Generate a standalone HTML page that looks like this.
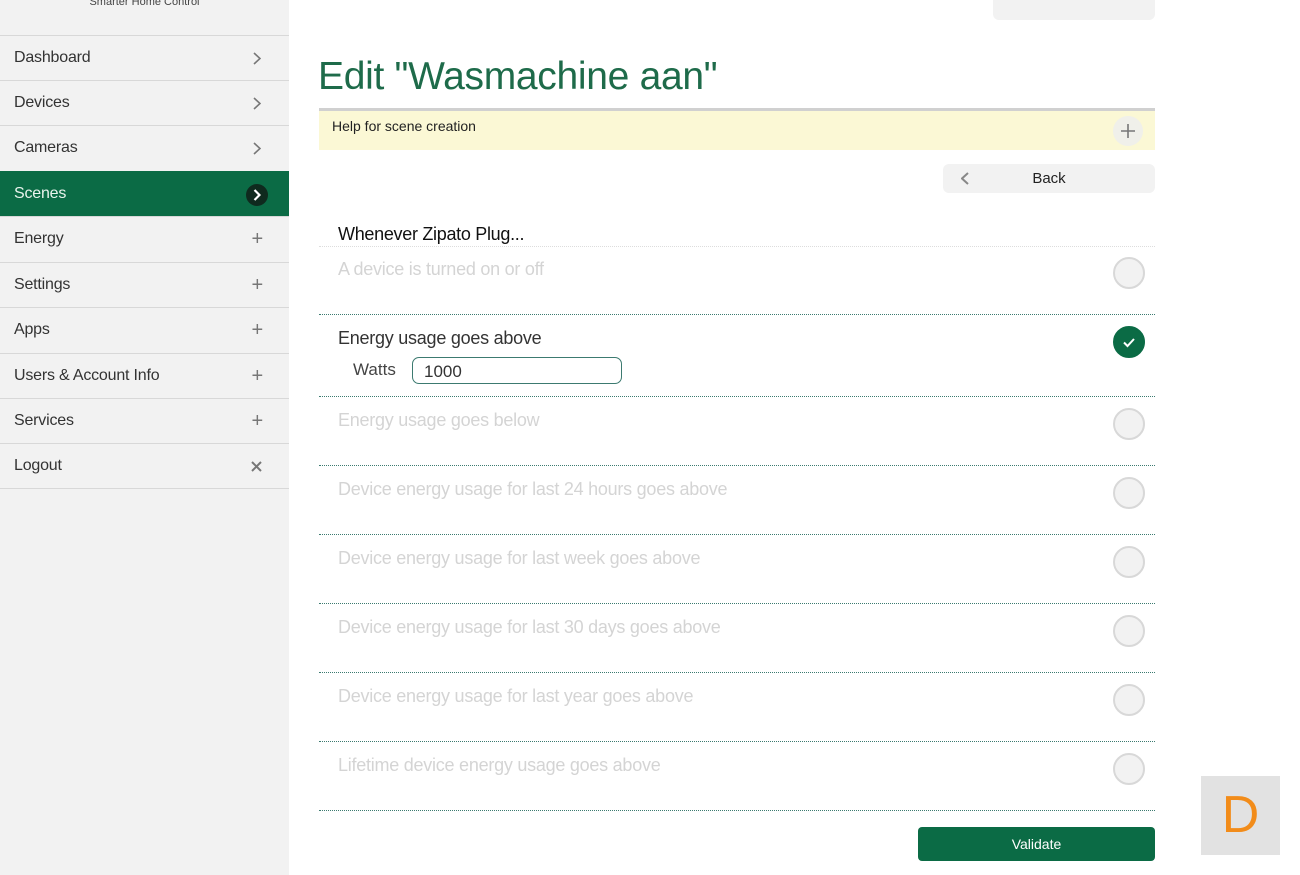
<!DOCTYPE html>
<html><head><style>
body{margin:0;width:1300px;height:875px;overflow:hidden;background:#fff;font-family:"Liberation Sans",sans-serif;position:relative}
.sb{position:absolute;left:0;top:0;width:289px;height:875px;background:#f2f2f2}
.sb .logo{position:absolute;left:0;width:289px;top:-4px;text-align:center;font-size:11px;color:#444}
.it{position:absolute;left:0;width:289px;height:44px;border-top:1px solid #d8d8d8;font-size:16px;color:#333;line-height:44px;box-sizing:border-box;padding-left:14px;letter-spacing:-0.2px}
.it .ic{position:absolute;right:26px;top:0;color:#777;font-size:20px}
.it svg{position:absolute;right:28px;top:16px}
.it.act{background:#0b6b45;color:#e8f3ec;border-color:#0b6b45}
.t{position:absolute;color:#1e6b4a;font-size:39px;left:318px;top:55px;letter-spacing:-0.3px}
.row{position:absolute;left:319px;width:836px;border-bottom:1px dotted #3c7a70}
.lbl{position:absolute;left:338px;font-size:18px;color:#d4d4d4;letter-spacing:-0.25px}
.c{position:absolute;left:1113px;width:28px;height:28px;border-radius:50%;border:2px solid #d8d8d8;background:#f2f2f2}
</style></head><body>
<div class="sb">
<div class="logo">Smarter Home Control</div>
<div class="it" style="top:35px">Dashboard<svg width="8" height="13"><path d="M1 1l6 5.5-6 5.5" fill="none" stroke="#777" stroke-width="1.6"/></svg></div>
<div class="it" style="top:80px">Devices<svg width="8" height="13"><path d="M1 1l6 5.5-6 5.5" fill="none" stroke="#777" stroke-width="1.6"/></svg></div>
<div class="it" style="top:125px">Cameras<svg width="8" height="13"><path d="M1 1l6 5.5-6 5.5" fill="none" stroke="#777" stroke-width="1.6"/></svg></div>
<div class="it act" style="top:171px;height:45px">Scenes<span style="position:absolute;right:21px;top:12px;width:22px;height:22px;border-radius:50%;background:#0f2a1e"><svg width="8" height="12" style="right:7px;top:5px"><path d="M1.5 1l5 5-5 5" fill="none" stroke="#fff" stroke-width="2.2"/></svg></span></div>
<div class="it" style="top:216px">Energy<span class="ic">+</span></div>
<div class="it" style="top:262px">Settings<span class="ic">+</span></div>
<div class="it" style="top:307px">Apps<span class="ic">+</span></div>
<div class="it" style="top:353px">Users &amp; Account Info<span class="ic">+</span></div>
<div class="it" style="top:398px">Services<span class="ic">+</span></div>
<div class="it" style="top:443px;border-bottom:1px solid #d8d8d8;height:46px">Logout<svg width="11" height="11" style="top:17px;right:27px"><path d="M1 1l9 9M10 1l-9 9" stroke="#777" stroke-width="2"/></svg></div>
</div>
<div style="position:absolute;left:993px;top:-10px;width:162px;height:30px;background:#f2f2f2;border-radius:6px"></div>
<div class="t">Edit "Wasmachine aan"</div>
<div style="position:absolute;left:319px;top:108px;width:836px;height:3px;background:#d0d0d0"></div>
<div style="position:absolute;left:319px;top:111px;width:836px;height:39px;background:#fbf8d5"></div>
<div style="position:absolute;left:332px;top:118px;font-size:14px;color:#222">Help for scene creation</div>
<div style="position:absolute;left:1113px;top:116px;width:30px;height:30px;border-radius:50%;background:#f0f0ea"><svg width="30" height="30"><path d="M15 8v14M8 15h14" stroke="#777" stroke-width="1.6"/></svg></div>
<div style="position:absolute;left:943px;top:164px;width:212px;height:29px;background:#f2f2f2;border-radius:6px;font-size:15px;line-height:29px;text-align:center;color:#222">Back<svg width="8" height="13" style="position:absolute;left:18px;top:8px"><path d="M7 1l-6 5.5 6 5.5" fill="none" stroke="#888" stroke-width="2"/></svg></div>
<div style="position:absolute;left:338px;top:224px;font-size:18px;color:#111;letter-spacing:-0.3px">Whenever Zipato Plug...</div>
<div style="position:absolute;left:319px;top:246px;width:836px;border-bottom:1px dotted #ddd"></div>
<div class="lbl" style="top:259px">A device is turned on or off</div><div class="c" style="top:257px"></div>
<div class="row" style="top:314px"></div>
<div class="lbl" style="top:328px;color:#333">Energy usage goes above</div>
<div class="c" style="top:326px;background:#0b6b45;border-color:#0b6b45"><svg width="28" height="28"><path d="M9 14.5l3.5 3.5 6.5-7" fill="none" stroke="#fff" stroke-width="2"/></svg></div>
<div style="position:absolute;left:353px;top:360px;font-size:17px;color:#444">Watts</div>
<div style="position:absolute;left:412px;top:357px;height:25px;border:1.5px solid #3c7a70;border-radius:7px;font-size:17px;color:#333;line-height:27px;padding-left:11px;width:197px">1000</div>
<div class="row" style="top:396px"></div>
<div class="lbl" style="top:410px">Energy usage goes below</div><div class="c" style="top:408px"></div>
<div class="row" style="top:465px"></div>
<div class="lbl" style="top:479px">Device energy usage for last 24 hours goes above</div><div class="c" style="top:477px"></div>
<div class="row" style="top:534px"></div>
<div class="lbl" style="top:548px">Device energy usage for last week goes above</div><div class="c" style="top:546px"></div>
<div class="row" style="top:603px"></div>
<div class="lbl" style="top:617px">Device energy usage for last 30 days goes above</div><div class="c" style="top:615px"></div>
<div class="row" style="top:672px"></div>
<div class="lbl" style="top:686px">Device energy usage for last year goes above</div><div class="c" style="top:684px"></div>
<div class="row" style="top:741px"></div>
<div class="lbl" style="top:755px">Lifetime device energy usage goes above</div><div class="c" style="top:753px"></div>
<div class="row" style="top:810px"></div>
<div style="position:absolute;left:918px;top:827px;width:237px;height:34px;background:#0b6b45;border-radius:4px;color:#fff;font-size:14px;text-align:center;line-height:34px">Validate</div>
<div style="position:absolute;left:1201px;top:776px;width:79px;height:79px;background:#e2e2e2;color:#f28c1a;font-size:52px;text-align:center;line-height:79px">D</div>
</body></html>
